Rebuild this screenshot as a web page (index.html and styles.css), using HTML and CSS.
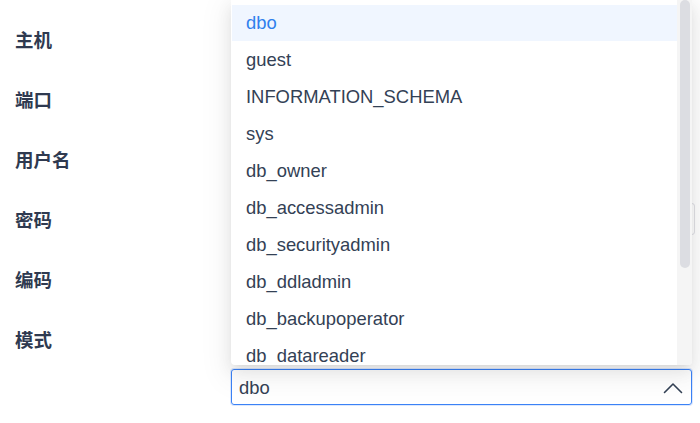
FILE: index.html
```html
<!DOCTYPE html>
<html lang="zh">
<head>
<meta charset="utf-8">
<link rel="stylesheet" href="styles.css">
</head>
<body>
<div class="page">
  <div class="form">
    <div class="row"><div class="label">主机</div><div class="field"></div></div>
    <div class="row"><div class="label">端口</div><div class="field"></div></div>
    <div class="row"><div class="label">用户名</div><div class="field"></div></div>
    <div class="row"><div class="label">密码</div><div class="field field-wide"></div></div>
    <div class="row"><div class="label">编码</div><div class="field"></div></div>
    <div class="row"><div class="label">模式</div><div class="field"></div></div>
    <div class="select-row">
      <div class="select">
        <span class="select-value">dbo</span>
        <svg class="chevron" width="20" height="12" viewBox="0 0 20 12"><path d="M1.5 10.5 L10 2 L18.5 10.5" fill="none" stroke="#334155" stroke-width="1.6" stroke-linecap="round" stroke-linejoin="round"/></svg>
      </div>
    </div>
  </div>
  <div class="menu">
    <div class="options">
      <div class="option active">dbo</div>
      <div class="option">guest</div>
      <div class="option">INFORMATION_SCHEMA</div>
      <div class="option">sys</div>
      <div class="option">db_owner</div>
      <div class="option">db_accessadmin</div>
      <div class="option">db_securityadmin</div>
      <div class="option">db_ddladmin</div>
      <div class="option">db_backupoperator</div>
      <div class="option">db_datareader</div>
    </div>
    <div class="scrollbar"><div class="thumb"></div></div>
  </div>
</div>
</body>
</html>
```
FILE: styles.css
```css
html, body {
  margin: 0;
  padding: 0;
  background: #ffffff;
}
.page {
  position: relative;
  width: 700px;
  height: 423px;
  overflow: hidden;
  font-family: "Liberation Sans", "Noto Sans CJK SC", sans-serif;
}
.form {
  display: flex;
  flex-direction: column;
  padding-top: 9px;
}
.row {
  display: flex;
  align-items: center;
  height: 60px;
}
.label {
  width: 216px;
  padding-left: 15px;
  font-family: "Noto Sans CJK SC", sans-serif;
  font-weight: 700;
  font-size: 18.5px;
  color: #2f3a50;
}
.field {
  height: 32px;
  border: 1px solid #e0e0e6;
  border-radius: 3px;
  box-sizing: border-box;
  width: 461px;
}
.field-wide {
  width: 464px;
}
.select-row {
  display: flex;
  padding-left: 231px;
  margin-top: 0;
}
.select {
  width: 461px;
  height: 36px;
  box-sizing: border-box;
  border: 1px solid #3b82f6;
  border-radius: 3px;
  box-shadow: 0 0 0 1px rgba(59,130,246,0.18);
  display: flex;
  align-items: center;
  justify-content: space-between;
  padding: 1px 8px 0 7px;
}
.select-value {
  font-size: 18.4px;
  color: #334155;
}
.chevron {
  display: block;
}
.menu {
  position: absolute;
  left: 231px;
  top: 0;
  width: 461px;
  height: 365px;
  background: #ffffff;
  border-radius: 0 0 4px 4px;
  box-shadow: 0 3px 6px -4px rgba(0,0,0,0.12), 0 6px 16px 0 rgba(0,0,0,0.08), 0 9px 28px 8px rgba(0,0,0,0.05);
  display: flex;
  overflow: hidden;
}
.options {
  flex: 1;
  padding-top: 5px;
  padding-left: 1px;
}
.option {
  height: 37px;
  box-sizing: border-box;
  padding-bottom: 2px;
  display: flex;
  align-items: center;
  padding-left: 14px;
  font-size: 18.4px;
  color: #334155;
}
.option.active {
  height: 36px;
  padding-bottom: 0;
  margin-bottom: 1px;
  background: #f0f6ff;
  color: #2f80ed;
}
.scrollbar {
  width: 15px;
  background: #f5f5f5;
  display: flex;
  justify-content: center;
}
.thumb {
  width: 10px;
  height: 268px;
  background: #dcdde2;
  border-radius: 5px;
}
```
